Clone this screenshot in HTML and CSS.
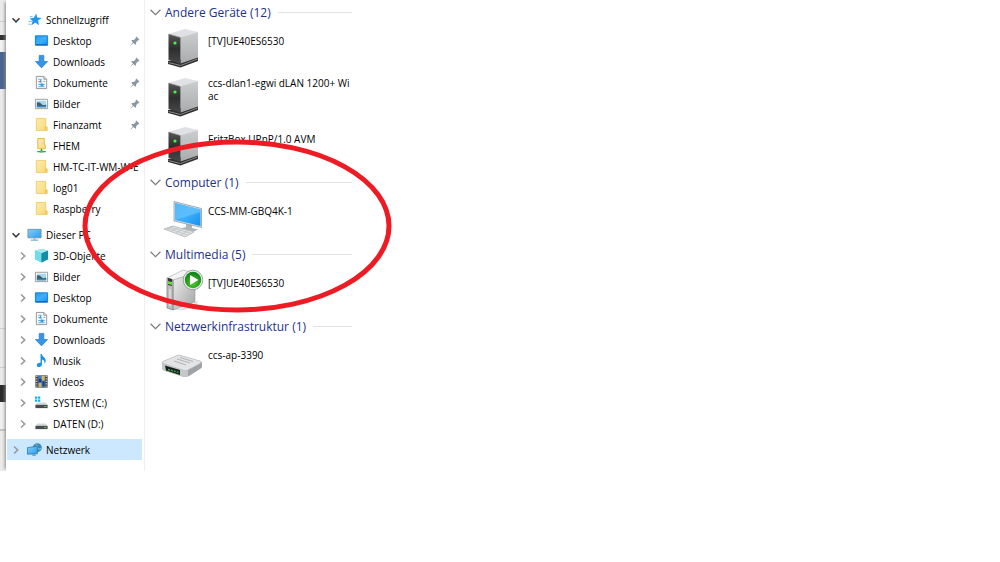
FILE: index.html
```
<!DOCTYPE html>
<html lang="de">
<head>
    <meta charset="UTF-8">
    <title>Netzwerk</title>
    <link rel="stylesheet" href="styles.css">
</head>
<body>

<!-- icons -->
<svg class="defs" aria-hidden="true">
    <defs>
        <linearGradient id="g-blue" x1="0" y1="0" x2="1" y2="1">
            <stop offset="0" stop-color="#1e9cf5"/><stop offset=".5" stop-color="#3db0fb"/><stop offset="1" stop-color="#168ff0"/>
        </linearGradient>
        <linearGradient id="g-screen" x1="0" y1="0" x2="1" y2="1">
            <stop offset="0" stop-color="#7fd0fb"/><stop offset="1" stop-color="#2a9eef"/>
        </linearGradient>
        <linearGradient id="g-side" x1="0" y1="0" x2="0" y2="1">
            <stop offset="0" stop-color="#cccdcf"/><stop offset="1" stop-color="#a9abad"/>
        </linearGradient>
        <linearGradient id="g-front" x1="0" y1="0" x2="0" y2="1">
            <stop offset="0" stop-color="#555"/><stop offset=".5" stop-color="#2e2e2e"/><stop offset="1" stop-color="#484848"/>
        </linearGradient>
        <linearGradient id="g-case" x1="0" y1="0" x2="1" y2="1">
            <stop offset="0" stop-color="#f0f0f0"/><stop offset="1" stop-color="#a3a3a3"/>
        </linearGradient>
        <radialGradient id="g-green" cx=".5" cy=".7" r=".6">
            <stop offset="0" stop-color="#4ecb2c"/><stop offset="1" stop-color="#13861a"/>
        </radialGradient>
        <linearGradient id="g-folder" x1="0" y1="0" x2="1" y2="1">
            <stop offset="0" stop-color="#ffecaa"/><stop offset="1" stop-color="#f8d977"/>
        </linearGradient>
    </defs>
    <symbol id="right" viewBox="0 0 10 10"><path d="M3 1.500 6.700 5 3 8.500" fill="none" stroke="#999" stroke-width="1.600"/></symbol>
    <symbol id="down" viewBox="0 0 10 10"><path d="M1.500 3.200 5 6.800 8.500 3.200" fill="none" stroke="#404040" stroke-width="1.600"/></symbol>
    <symbol id="group-down" viewBox="0 0 10 10"><path d="M.5 2.500 5 7 9.500 2.500" fill="none" stroke="#777" stroke-width="1"/></symbol>
    <symbol id="pin" viewBox="0 0 10 10"><path d="M6.300.6 9.400 3.600 8.500 4.400 8 4.300 6.200 6.300 6 8.200 5.300 8.800 3.500 7 .7 9.500.4 9.200 2.900 6.400 1.300 4.700 2 4.100 3.900 3.900 5.800 2.200 5.600 1.400Z" fill="#8997a3"/></symbol>
    <symbol id="star" viewBox="0 0 16 16"><path d="M9.800 1.500 10.900 5.800 15.500 6.300 11.800 9 12.800 14 8.800 11.300 4.500 14.500 6 9.600 3 7 7.300 6.200Z" fill="#2196ee"/><path d="M3 5h3M1.500 10h3.500M1.500 13h2.500" stroke="#62b8f4"/></symbol>
    <symbol id="desktop" viewBox="0 0 16 16"><path d="M1.500 3h13v10h-13z" fill="url(#g-blue)" stroke="#1579cf"/><path d="M2 12.500h12" stroke="#0c5fa8"/></symbol>
    <symbol id="download" viewBox="0 0 16 16"><path d="M5.500 1.500h5v6.500h4L8 14.800 1.500 8h4z" fill="#3596e8" stroke="#1f78ca" stroke-width=".7"/></symbol>
    <symbol id="document" viewBox="0 0 16 16"><path d="M2.500 1.500h8l3 3v10h-11z" fill="#fbfbfb" stroke="#8f9294"/><path d="M10.500 1.500v3h3" fill="#ddd" stroke="#8f9294"/><path d="M4.500 4.500h4M4.500 7h2M10 7h2M4.500 12.500h7" stroke="#58aee4"/><path d="M7 4.500 5.500 8h3zM7 9h3v3H7zM4.500 9.500h7v1h-7z" fill="#349ae2"/></symbol>
    <symbol id="picture" viewBox="0 0 16 16"><path d="M1.500 3.500h13v10h-13z" fill="#fff" stroke="#949a9e"/><path d="M3 5h10v7H3z" fill="#a8d7f2"/><path d="M3 7q3-1 5 1.500T13 9v3H3z" fill="#3a6266"/><path d="M3 10.500h10V12H3z" fill="#3388be"/></symbol>
    <symbol id="folder" viewBox="0 0 16 16"><path d="M2.500 1.500h10v9h1.500v4H2.500z" fill="url(#g-folder)" stroke="#e7c45c" stroke-width=".8"/><path d="M11.500 10.500h2.500v4h-2.500z" fill="#f1ca5c"/></symbol>
    <symbol id="net-folder" viewBox="0 0 16 16"><path d="M4 .5h7v7h1v4H4z" fill="url(#g-folder)" stroke="#e2b947"/><path d="M8 11.500V14M3.500 14.500h9" stroke="#2da13c" stroke-width="1.500"/><path d="M6 13.500h4v2H6z" fill="#42bd51"/></symbol>
    <symbol id="pc" viewBox="0 0 16 16"><path d="M1 2.500h14v9H1z" fill="url(#g-screen)" stroke="#7295ac"/><path d="M7 12h2v1.500H7z" fill="#9aa5ad"/><path d="M4 14h8" stroke="#4a9cce"/></symbol>
    <symbol id="cube" viewBox="0 0 16 16"><path d="m8 1 7 2v9l-7 3.500L1 12V3z" fill="#39bfd3"/><path d="m8 1 7 2-7 2.500L1 3z" fill="#a5eaf2"/><path d="m1 3 7 2.500v10L1 12z" fill="#72dce8"/><path d="m8 5.500 7-2.500v9l-7 3.500z" fill="#168ba5"/></symbol>
    <symbol id="music" viewBox="0 0 16 16"><path d="M7 1h1.500c0 3 4.500 4 4 7.500-.2 1.500-1 2.500-1.500 3 .8-3-1-4-2.500-4.500V12c0 1.500-1.300 3-3.200 3S3 14 3 12.800C3 11.300 5 10 7 10.500z" fill="#1793e8"/></symbol>
    <symbol id="video" viewBox="0 0 16 16"><path d="M1.500 1.500h13v13h-13z" fill="#414141"/><path d="M3 2v12M13 2v12" stroke="#ddd" stroke-width="1.300" stroke-dasharray="1.300 1.300"/><path d="M4.500 2h7v12h-7z" fill="#397fcc"/><path d="M8 2h3.500v5H8zM5 9h3v5H5z" fill="#d2b55f"/><path d="M5 5h3v4H5zM9 8h2v5H9z" fill="#1c3e7b"/></symbol>
    <symbol id="drive" viewBox="0 0 16 16"><path d="M3.500 8h9l2 3h-13z" fill="#d5d7d8"/><path d="M1.500 10.500h13V14h-13z" fill="#4a4d4f"/><path d="M11 12.300h2" stroke="#51df65"/></symbol>
    <symbol id="sysdrive" viewBox="0 0 16 16"><use href="#drive"/><path d="M1 1.500h2.500V4H1zM4.200 1.500h2.500V4H4.200zM1 4.700h2.500v2.500H1zM4.200 4.700h2.500v2.500H4.200z" fill="#1caeed"/></symbol>
    <symbol id="network" viewBox="0 0 16 16"><circle cx="11" cy="6" r="4.800" fill="#4189b5"/><path d="M9 2.500q3 1 2 3.500t4 1" fill="none" stroke="#8dd0eb"/><path d="M.5 6 11 4.500v8L.5 13z" fill="url(#g-screen)" stroke="#2a719d" stroke-width=".8"/><path d="m5 13 3-.3 2 2-4 .3z" fill="#63a6c7"/></symbol>

    <symbol id="server" viewBox="0 0 42 42">
        <path d="m7 34 15-2 15-2v4L19.500 40.500 7 37z" fill="#303030"/>
        <path d="m7.500 35.500 12 3L36.500 32" fill="none" stroke="#858585"/>
        <path d="M7.500 7 24 2l13 3-17.500 6z" fill="#e0e1e4"/>
        <path d="M19.500 10.500 37 5v25.500l-17.500 6z" fill="url(#g-side)"/>
        <path d="m7.500 7 12 3.500v26L7.500 33z" fill="url(#g-front)"/>
        <path d="m7.500 7 12 3.500" stroke="#999" stroke-width=".7"/>
        <circle cx="14" cy="16" r="1.600" fill="#46f34a"/>
    </symbol>
    <symbol id="computer" viewBox="0 0 42 42">
        <path d="m25 27 6 1v3l6 1.500-4 2-13-3 5-1.500z" fill="#aeb5b9"/>
        <path d="m13 4.500 27.500 7V30.500L13 24z" fill="#d9e1e5" stroke="#737f87" stroke-width=".6"/>
        <path d="m14 6 25.500 6.500V29L14 23z" fill="url(#g-blue)"/>
        <path d="m14 6 25.500 6.500V15L14 23z" fill="#70c6fa" opacity=".65"/>
        <path d="m3 32 9-3 21 6-9 5z" fill="#e1e3e5" stroke="#a7adb1" stroke-width=".7"/>
        <path d="m9 30 21 6.500M6 31l20.500 7M12 29.500 6 33M17 31l-7 3M22 32l-7 4M27 33.500 20 38" stroke="#b2b8bc" stroke-width=".6"/>
    </symbol>
    <symbol id="media" viewBox="0 0 42 42">
        <path d="m11 41 18-3 8-7-2 7-12 3z" fill="#ddd"/>
        <path d="M6 9 22 1l12 3-21 8z" fill="#f3f3f3" stroke="#aaa" stroke-width=".6"/>
        <path d="m12 11 22-7v29l-22 8z" fill="url(#g-case)" stroke="#999" stroke-width=".6"/>
        <path d="m6 9 6 2v30l-6-2z" fill="#bcbcbc" stroke="#777" stroke-width=".7"/>
        <path d="m7 9 4 1v7l-4-1z" fill="#333"/><path d="m7 12 4 1v3l-4-1z" fill="#62dd3b"/>
        <path d="M9 20v17" stroke="#eee"/>
        <circle cx="32" cy="11" r="9.800" fill="#e9eeea" stroke="#84948a" stroke-width=".8"/>
        <circle cx="32" cy="11" r="8.200" fill="url(#g-green)"/>
        <path d="m29 6 8.500 5-8.500 5z" fill="#fff"/>
    </symbol>
    <symbol id="router" viewBox="0 0 42 42">
        <path d="M1 22q0-1 2-2l13-5.500q2-1 4 0L39 20q2 1 2 2v4q0 1-2 2l-11 7q-2 1-5 1L4 30q-3-1-3-3z" fill="#a0a3a5"/>
        <path d="M1 22q0-1 2-2l13-5.500q2-1 4 0L39 20q2 1 0 2.500L27 29q-2 1-4 .5z" fill="#e2e4e5" stroke="#b5b8ba" stroke-width=".6"/>
        <path d="m1 22 22 7.500q2 .5 4-.5v6.500q-2 .500-4 .5L4 30q-3-1-3-3z" fill="#c5c8ca"/>
        <path d="m4 24.500 15 4.500v5L5 29.500z" fill="#172019"/>
        <path d="m7 28.500 11 3" stroke="#40a755" stroke-width="1.500" stroke-dasharray="2 1"/>
        <path d="m16 18 13 4M19 16.500l13 4M13 20l12 4" stroke="#b0b2b4" stroke-width="1"/>
    </symbol>
</svg>

<div class="window">
    <div class="backdrop">
        <div class="bar-top"></div>
        <div class="bar-dark"></div>
        <div class="bar-light"></div>
        <div class="bar-blue"></div>
        <div class="bar-page"></div>
        <div class="bar-panel"></div>
        <div class="bar-black"></div>
        <div class="bar-foot"></div>
        <div class="bar-end"></div>
    </div>

    <nav class="sidebar">
        <ul class="tree">
            <li class="root"><button class="toggle" aria-label="Schnellzugriff"><svg><use href="#down"/></svg></button><a href="#"><svg class="icon"><use href="#star"/></svg>Schnellzugriff</a></li>
            <li><a href="#"><svg class="icon"><use href="#desktop"/></svg>Desktop</a><svg class="pin"><use href="#pin"/></svg></li>
            <li><a href="#"><svg class="icon"><use href="#download"/></svg>Downloads</a><svg class="pin"><use href="#pin"/></svg></li>
            <li><a href="#"><svg class="icon"><use href="#document"/></svg>Dokumente</a><svg class="pin"><use href="#pin"/></svg></li>
            <li><a href="#"><svg class="icon"><use href="#picture"/></svg>Bilder</a><svg class="pin"><use href="#pin"/></svg></li>
            <li><a href="#"><svg class="icon"><use href="#folder"/></svg>Finanzamt</a><svg class="pin"><use href="#pin"/></svg></li>
            <li><a href="#"><svg class="icon"><use href="#net-folder"/></svg>FHEM</a></li>
            <li><a href="#"><svg class="icon"><use href="#folder"/></svg>HM-TC-IT-WM-W-E</a></li>
            <li><a href="#"><svg class="icon"><use href="#folder"/></svg>log01</a></li>
            <li><a href="#"><svg class="icon"><use href="#folder"/></svg>Raspberry</a></li>
        </ul>
        <ul class="tree">
            <li class="root"><button class="toggle" aria-label="Dieser PC"><svg><use href="#down"/></svg></button><a href="#"><svg class="icon"><use href="#pc"/></svg>Dieser PC</a></li>
            <li><button class="toggle" aria-label="3D-Objekte"><svg><use href="#right"/></svg></button><a href="#"><svg class="icon"><use href="#cube"/></svg>3D-Objekte</a></li>
            <li><button class="toggle" aria-label="Bilder"><svg><use href="#right"/></svg></button><a href="#"><svg class="icon"><use href="#picture"/></svg>Bilder</a></li>
            <li><button class="toggle" aria-label="Desktop"><svg><use href="#right"/></svg></button><a href="#"><svg class="icon"><use href="#desktop"/></svg>Desktop</a></li>
            <li><button class="toggle" aria-label="Dokumente"><svg><use href="#right"/></svg></button><a href="#"><svg class="icon"><use href="#document"/></svg>Dokumente</a></li>
            <li><button class="toggle" aria-label="Downloads"><svg><use href="#right"/></svg></button><a href="#"><svg class="icon"><use href="#download"/></svg>Downloads</a></li>
            <li><button class="toggle" aria-label="Musik"><svg><use href="#right"/></svg></button><a href="#"><svg class="icon"><use href="#music"/></svg>Musik</a></li>
            <li><button class="toggle" aria-label="Videos"><svg><use href="#right"/></svg></button><a href="#"><svg class="icon"><use href="#video"/></svg>Videos</a></li>
            <li><button class="toggle" aria-label="SYSTEM (C:)"><svg><use href="#right"/></svg></button><a href="#"><svg class="icon"><use href="#sysdrive"/></svg>SYSTEM (C:)</a></li>
            <li><button class="toggle" aria-label="DATEN (D:)"><svg><use href="#right"/></svg></button><a href="#"><svg class="icon"><use href="#drive"/></svg>DATEN (D:)</a></li>
        </ul>
        <ul class="tree">
            <li class="root active"><button class="toggle" aria-label="Netzwerk"><svg><use href="#right"/></svg></button><a href="#"><svg class="icon"><use href="#network"/></svg>Netzwerk</a></li>
        </ul>
    </nav>

    <main class="content">
        <section>
            <button class="group"><svg><use href="#group-down"/></svg>Andere Geräte (12)</button>
            <a class="device" href="#"><svg><use href="#server"/></svg><span>[TV]UE40ES6530</span></a>
            <a class="device" href="#"><svg><use href="#server"/></svg><span>ccs-dlan1-egwi dLAN 1200+ Wi<br>ac</span></a>
            <a class="device" href="#"><svg><use href="#server"/></svg><span>FritzBox UPnP/1.0 AVM</span></a>
        </section>
        <section>
            <button class="group"><svg><use href="#group-down"/></svg>Computer (1)</button>
            <a class="device" href="#"><svg><use href="#computer"/></svg><span>CCS-MM-GBQ4K-1</span></a>
        </section>
        <section>
            <button class="group"><svg><use href="#group-down"/></svg>Multimedia (5)</button>
            <a class="device" href="#"><svg><use href="#media"/></svg><span>[TV]UE40ES6530</span></a>
        </section>
        <section>
            <button class="group"><svg><use href="#group-down"/></svg>Netzwerkinfrastruktur (1)</button>
            <a class="device" href="#"><svg><use href="#router"/></svg><span>ccs-ap-3390</span></a>
        </section>
    </main>

    <!-- red marker over the list -->
    <svg class="marker" viewBox="0 0 310 174" aria-hidden="true"><ellipse cx="155" cy="87" rx="152" ry="84"/></svg>
</div>

</body>
</html>
```
FILE: styles.css
```
body {
    margin: 0;
    background: #fff;
    color: #000;
    font-family: "Open Sans", "Noto Sans", sans-serif;
    font-size: 10px;
}

svg {
    display: block;
    flex: none;
}

.defs {
    position: absolute;
    width: 0;
    height: 0;
}

a {
    color: inherit;
    text-decoration: none;
}

button {
    padding: 0;
    border: 0;
    background: none;
    font: inherit;
}

.window {
    position: relative;
    display: flex;
}

/* what shows from the window behind */
.backdrop {
    display: flex;
    flex-direction: column;
    width: 6px;
    background: #ebebeb;
}

.bar-top { height: 21px; border-bottom: 1px solid #cfcfcf; }
.bar-dark { height: 5px; margin-top: 13px; background: #333; }
.bar-light { height: 12px; background: #f1f1f1; }
.bar-blue { height: 37px; background: #47658f; }
.bar-page { height: 239px; border-bottom: 1px solid #cfcfcf; }
.bar-panel { height: 38px; border-bottom: 1px solid #cfcfcf; }
.bar-black { height: 17px; margin-top: 17px; background: #2b2b2b; }
.bar-foot { height: 27px; background: #f0f0f0; border-bottom: 2px solid #c5c5c5; }
.bar-end { flex: 1; }

/* navigation tree */
.sidebar {
    box-sizing: border-box;
    width: 139px;
    padding: 9px 2px 11px 1px;
    border-right: 1px solid #f0f0f0;
    box-shadow: -3px 0 3px -2px #888;
    background: #fff;
}

.tree {
    margin: 0 0 5px;
    padding: 0;
    list-style: none;
}

.tree:last-child {
    margin-bottom: 0;
}

.tree li {
    display: flex;
    align-items: center;
    height: 21px;
    padding-left: 27px;
}

.tree li:has(.toggle) {
    padding-left: 11px;
}

.tree li.root {
    padding-left: 4px;
}

.tree a {
    display: flex;
    align-items: center;
    flex: 1;
    min-width: 0;
    gap: 4px;
    overflow: hidden;
    white-space: nowrap;
}

.tree .active {
    background: #cce8ff;
}

.toggle {
    width: 16px;
}

.toggle svg {
    width: 10px;
    height: 10px;
}

.icon {
    width: 15px;
    height: 15px;
}

.pin {
    width: 10px;
    height: 10px;
    margin-right: 2px;
}

/* device list */
.content {
    flex: 1;
    padding: 1px 0 0 5px;
}

.content section {
    max-width: 202px;
}

.group {
    display: flex;
    align-items: center;
    gap: 4px;
    width: 100%;
    height: 23px;
    color: #1e3287;
    font-size: 12px;
    white-space: nowrap;
}

.group svg {
    width: 11px;
    height: 11px;
}

.group::after {
    content: "";
    flex: 1;
    margin-left: 3px;
    border-top: 1px solid #e2e2e2;
}

.device {
    display: flex;
    gap: 5px;
    height: 49px;
    padding-left: 11px;
    line-height: 13px;
}

.device svg {
    width: 42px;
    height: 42px;
    margin-top: 3px;
}

.device span {
    display: flex;
    flex-direction: column;
    justify-content: center;
    height: 34px;
    white-space: nowrap;
}

.marker {
    position: absolute;
    left: 82px;
    top: 139px;
    width: 310px;
    height: 174px;
    pointer-events: none;
}

.marker ellipse {
    fill: none;
    stroke: #ed1c24;
    stroke-width: 5;
}
```
